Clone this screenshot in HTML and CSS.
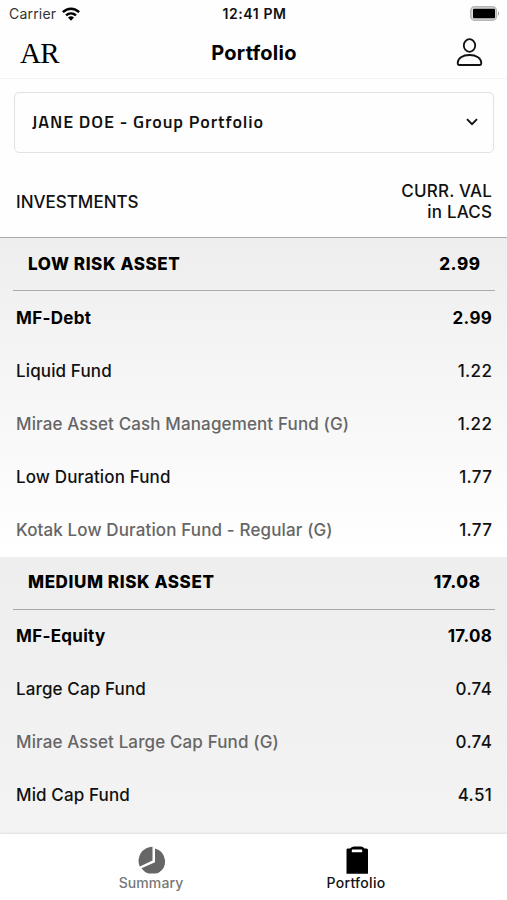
FILE: index.html
```html
<!DOCTYPE html>
<html lang="en">
<head>
<meta charset="utf-8">
<title>Portfolio</title>
<link rel="stylesheet" href="styles.css">
</head>
<body>
<div class="app">
  <div class="status">
    <div class="carrier"><span>Carrier</span>
      <svg width="18" height="14" viewBox="0 0 18 14" fill="none" stroke="#000" stroke-width="2.5"><path d="M.9 5.2C5.5.6 12.500.6 17.100 5.200"/><path d="M4 8.400C6.900 5.700 11.100 5.700 14 8.400"/><path d="M6 10.500Q9 7.900 12 10.500L9 13.700Z" fill="#000" stroke="none"/></svg>
    </div>
    <div class="clock">12:41 PM</div>
    <svg class="battery" width="30" height="15" viewBox="0 0 30 15"><rect x=".8" y=".8" width="25.600" height="13.400" rx="3.800" fill="#ddd" stroke="#b5b5b5" stroke-width="1.500"/><rect x="3" y="2.800" width="22" height="9.400" rx="1"/><path d="M28 5Q30 7.500 28 10Z" fill="#999"/></svg>
  </div>
  <header class="header">
    <div class="logo">AR</div>
    <h1>Portfolio</h1>
    <svg class="user" width="27" height="29" viewBox="0 0 27 29" fill="none" stroke="#111" stroke-width="1.800"><ellipse cx="13.500" cy="7.500" rx="5.700" ry="6.300"/><path d="M1.700 25C1.700 20.500 6.500 17 13.500 17S25.300 20.500 25.300 25Q25.300 27 23.800 27H3.200Q1.700 27 1.700 25Z"/></svg>
  </header>
  <main class="main">
    <div class="select"><span>JANE DOE - Group Portfolio</span>
      <svg width="12" height="8" viewBox="0 0 12 8" fill="none" stroke="#111" stroke-width="1.900"><path d="M1 1.200L6 6.200L11 1.200"/></svg>
    </div>
    <div class="columns"><span>INVESTMENTS</span><span class="value-label">CURR. VAL<br>in LACS</span></div>
    <section class="group first">
      <div class="group-head"><span>LOW RISK ASSET</span><span>2.99</span></div>
      <div class="row strong"><span>MF-Debt</span><span>2.99</span></div>
      <div class="row"><span>Liquid Fund</span><span>1.22</span></div>
      <div class="row fund"><span>Mirae Asset Cash Management Fund (G)</span><span>1.22</span></div>
      <div class="row"><span>Low Duration Fund</span><span>1.77</span></div>
      <div class="row fund"><span>Kotak Low Duration Fund - Regular (G)</span><span>1.77</span></div>
    </section>
    <section class="group second">
      <div class="group-head"><span>MEDIUM RISK ASSET</span><span>17.08</span></div>
      <div class="row strong"><span>MF-Equity</span><span>17.08</span></div>
      <div class="row"><span>Large Cap Fund</span><span>0.74</span></div>
      <div class="row fund"><span>Mirae Asset Large Cap Fund (G)</span><span>0.74</span></div>
      <div class="row"><span>Mid Cap Fund</span><span>4.51</span></div>
    </section>
  </main>
  <nav class="tabs">
    <div class="tab"><svg width="28" height="28" viewBox="0 0 28 28" fill="#666"><path d="M14.500 .7V14.500L1.800 20.500A14 14 0 0 1 14.500 .7Z"/><path d="M17 2.500A13.300 13.300 0 0 1 21 26.500Q19.500 27.400 17 27.400H11Q7 27.200 3.500 22.300L17 16.300Z"/></svg><span>Summary</span></div>
    <div class="tab active"><svg width="24" height="28" viewBox="0 0 24 28"><path fill-rule="evenodd" d="M1.500 3.500Q1.500 2.500 3 2.500H5Q7 .5 9 .5H16Q18 .5 19.500 2.500H21.500Q23 2.500 23 4V27.700H1.500ZM7.500 3.500Q6.800 3.500 6.800 4.500V6.300H17.200V4.500Q17.200 3.500 16.500 3.500Z"/></svg><span>Portfolio</span></div>
  </nav>
</div>
</body>
</html>
```
FILE: styles.css
```css
* { box-sizing: border-box; }
body { margin: 0; background: #fefefe; color: #111; font-family: Inter, "Liberation Sans", sans-serif; }
svg { display: block; flex: none; }
.app { height: 900px; display: flex; flex-direction: column; overflow: hidden; }
.status { height: 27px; flex: none; display: grid; grid-template-columns: 1fr auto 1fr; align-items: center; padding: 0 7px 0 9px; font-size: 14px; }
.carrier { display: flex; align-items: center; gap: 6px; letter-spacing: .2px; color: #333; }
.clock { font-weight: 600; letter-spacing: .6px; }
.battery { justify-self: end; }
.header { height: 52px; flex: none; display: grid; grid-template-columns: 1fr auto 1fr; align-items: center; padding: 0 24px 0 20px; border-bottom: 1px solid #f3f3f3; }
.logo { font: 29px/1 "Liberation Serif", serif; color: #000; letter-spacing: -.6px; padding-top: 1px; }
.header h1 { margin: 0 0 0 5px; font-size: 20px; font-weight: 700; letter-spacing: .25px; color: #000; }
.user { justify-self: end; }
.main { flex: 1; min-height: 0; overflow: hidden; }
.select { margin: 13px 13px 0 14px; height: 61px; border: 1px solid #e2e2e2; border-radius: 5px; padding: 0 15px 2px 17px; display: flex; align-items: center; justify-content: space-between; font: 600 18px "Titillium Web", Roboto, sans-serif; letter-spacing: .89px; }
.columns { height: 84px; display: flex; align-items: center; justify-content: space-between; padding: 14px 15px 0 16px; font-size: 17px; font-weight: 500; line-height: 21px; }
.value-label { text-align: right; letter-spacing: .2px; margin-right: -.2px; }
.group { display: flow-root; }
.first { height: 320px; border-top: 1px solid #aaa; background: linear-gradient(#eee, #fff); }
.second { height: 319px; background: linear-gradient(#eee, #f4f4f4); }
.group-head { height: 53px; margin: 0 12px 0 13px; padding: 0 14.400px 0 15px; display: flex; align-items: center; justify-content: space-between; border-bottom: 1px solid #aaa; font-size: 17px; font-weight: 800; letter-spacing: .6px; color: #000; }
.second .group-head { padding-bottom: 2px; }
.row { height: 53px; padding: 0 14.800px 0 16px; display: flex; align-items: center; justify-content: space-between; font-size: 17px; font-weight: 500; letter-spacing: .13px; }
.row span:last-child { letter-spacing: .35px; }
.second .row { padding-bottom: 1px; }
.strong { font-weight: 700; letter-spacing: .3px; color: #000; }
.fund span:first-child { color: #666; }
.tabs { height: 66px; flex: none; background: #fff; box-shadow: 0 0 3px #ccc; display: flex; justify-content: center; padding-top: 12px; position: relative; }
.tab { width: 205px; display: flex; flex-direction: column; align-items: center; font-size: 14px; font-weight: 500; line-height: 17px; letter-spacing: .1px; color: #777; }
.tab svg { margin-left: 2px; }
.active { color: #111; letter-spacing: .3px; }
```
